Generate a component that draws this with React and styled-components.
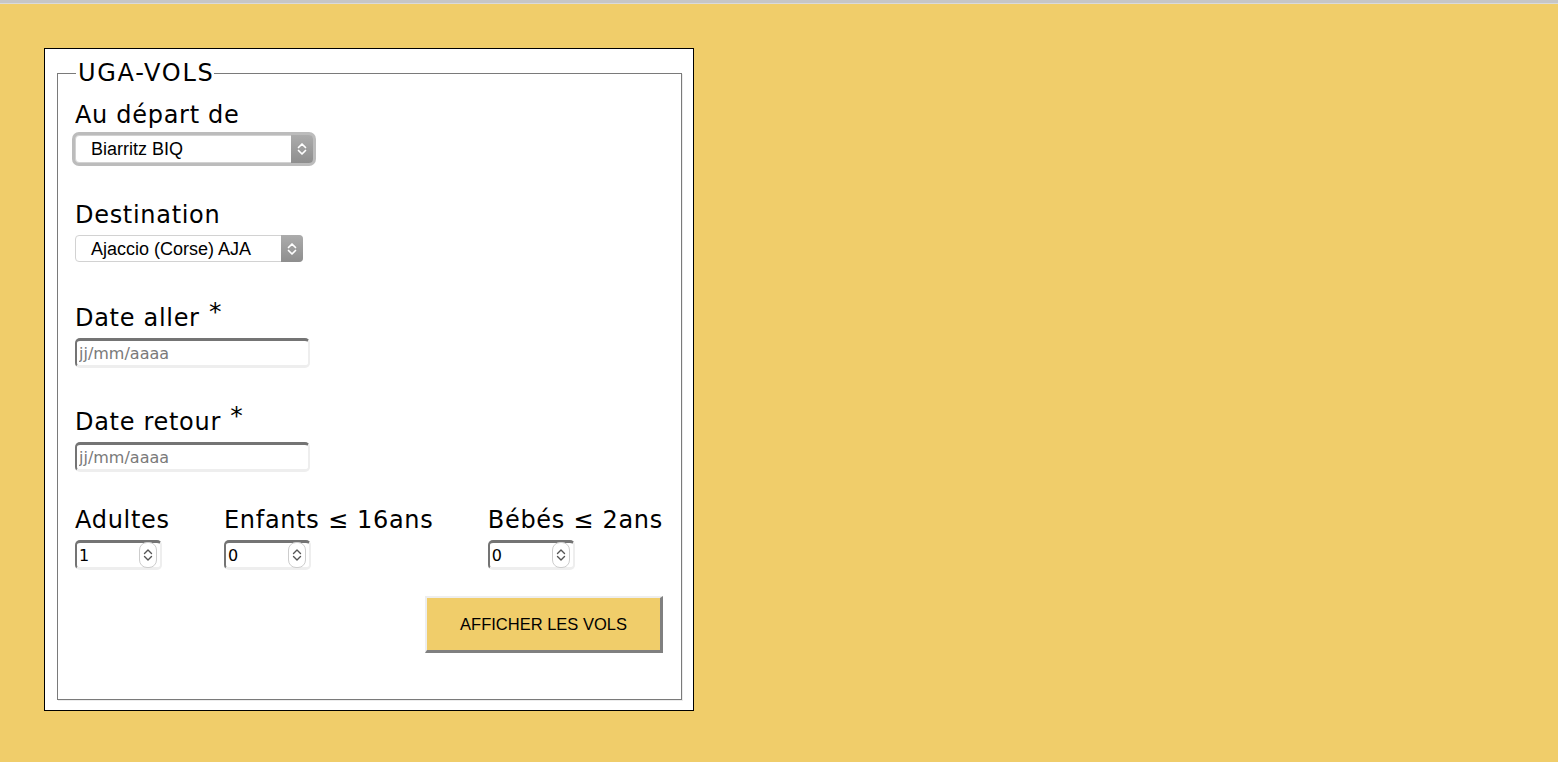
import React from "react";
import styled, { createGlobalStyle } from "styled-components";

const GlobalStyle = createGlobalStyle`
  html, body {
    margin: 0;
    padding: 0;
    background: #f0cd6a;
  }
  body {
    font-family: "DejaVu Sans", Verdana, sans-serif;
    height: 762px;
    overflow: hidden;
  }
`;

const TopRule = styled.div`
  height: 3px;
  background: #c6c6c6;
  border-bottom: 1px solid #dadada;
`;

const Page = styled.div`
  padding: 44px 0 0 44px;
`;

const Card = styled.div`
  width: 650px;
  height: 663px;
  box-sizing: border-box;
  background: #fff;
  border: 1px solid #000;
  padding: 12px 11px 10px 12px;
`;

const Fieldset = styled.fieldset`
  margin: 0;
  height: 100%;
  box-sizing: border-box;
  border: 1px solid #7a7a7a;
  box-shadow: 1px 1px 0 #ececec;
  padding: 16px 18px 0 17px;
`;

const Legend = styled.legend`
  font-size: 24px;
  line-height: 24px;
  letter-spacing: 1.7px;
  padding: 0 0 0 2px;
  margin-left: 1px;
  color: #000;
`;

const Group = styled.div`
  display: flex;
  flex-direction: column;
  align-items: flex-start;
  margin-bottom: ${p => p.$after}px;
`;

const Label = styled.label`
  font-size: 24px;
  line-height: 28px;
  letter-spacing: 0.7px;
  color: #000;
  margin-bottom: 6px;
  white-space: nowrap;
`;

const Star = styled.span`
  font-size: 25px;
  line-height: 0;
  vertical-align: 6px;
  margin-left: 1px;
`;

const SelectBox = styled.div`
  display: flex;
  align-items: center;
  width: ${p => p.$w}px;
  height: ${p => p.$h}px;
  box-sizing: border-box;
  border: 1px solid #d2d2d2;
  border-radius: 4px;
  background: #fff;
  font-family: "Liberation Sans", Arial, sans-serif;
  font-size: 18px;
  color: #000;
  ${p => p.$focused && "box-shadow: 0 0 0 3px #bcbcbc;"}
`;

const SelectText = styled.span`
  flex: 1;
  padding-left: 15px;
  padding-top: 1px;
`;

const SelectArrow = styled.span`
  align-self: stretch;
  width: 22px;
  margin: -1px -1px -1px 0;
  border-radius: 0 4px 4px 0;
  background: linear-gradient(#acacac, #8e8e8e);
  display: flex;
  align-items: center;
  justify-content: center;
`;

const TextField = styled.input`
  width: ${p => p.$w}px;
  height: 30px;
  box-sizing: border-box;
  border-style: solid;
  border-width: 3px 2px 3px 2px;
  border-color: #747474 #eeeeee #eeeeee #747474;
  border-radius: 5px;
  padding: 0 2px;
  font-family: "DejaVu Sans", Verdana, sans-serif;
  font-size: 16px;
  color: #000;
  background: #fff;
  outline: none;
  &::placeholder {
    color: #7a7a7a;
  }
`;

const CountRow = styled.div`
  display: flex;
  justify-content: space-between;
  margin-bottom: 26px;
`;

const NumberBox = styled.div`
  display: flex;
  align-items: center;
  width: 87px;
  height: 30px;
  box-sizing: border-box;
  border-style: solid;
  border-width: 3px 2px 3px 2px;
  border-color: #747474 #eeeeee #eeeeee #747474;
  border-radius: 5px;
  background: #fff;
`;

const NumberInput = styled.input`
  flex: 1;
  width: 0;
  border: none;
  outline: none;
  padding: 0 0 0 2px;
  font-family: "DejaVu Sans", Verdana, sans-serif;
  font-size: 16px;
  color: #000;
  background: transparent;
`;

const Spinner = styled.span`
  width: 18px;
  height: 26px;
  box-sizing: border-box;
  margin-right: 3px;
  border: 1px solid #cdcdcd;
  border-radius: 8px;
  display: flex;
  align-items: center;
  justify-content: center;
  background: #fff;
`;

const Actions = styled.div`
  display: flex;
  justify-content: flex-end;
`;

const Button = styled.button`
  width: 238px;
  height: 57px;
  box-sizing: border-box;
  background: #f0cd6a;
  border-style: solid;
  border-width: 2px 3px 3px 2px;
  border-color: #eeeeee #808080 #808080 #eeeeee;
  font-family: "Liberation Sans", Arial, sans-serif;
  font-size: 16.5px;
  color: #000;
  padding: 0;
  cursor: pointer;
`;

const Chevrons = ({ color, width }) => (
  <svg width="12" height="18" viewBox="0 0 12 18">
    <polyline points="2.5,7.5 6,4 9.5,7.5" fill="none" stroke={color} strokeWidth={width} strokeLinecap="round" strokeLinejoin="round" />
    <polyline points="2.5,10.5 6,14 9.5,10.5" fill="none" stroke={color} strokeWidth={width} strokeLinecap="round" strokeLinejoin="round" />
  </svg>
);

const Select = ({ value, w, h, focused }) => (
  <SelectBox $w={w} $h={h} $focused={focused}>
    <SelectText>{value}</SelectText>
    <SelectArrow>
      <Chevrons color="#fff" width={1.7} />
    </SelectArrow>
  </SelectBox>
);

const Counter = ({ label, value }) => (
  <Group $after={0}>
    <Label>{label}</Label>
    <NumberBox>
      <NumberInput defaultValue={value} />
      <Spinner>
        <Chevrons color="#555" width={1.4} />
      </Spinner>
    </NumberBox>
  </Group>
);

export default function App() {
  return (
    <>
      <GlobalStyle />
      <TopRule />
      <Page>
        <Card>
          <Fieldset>
            <Legend>UGA-VOLS</Legend>
            <Group $after={38}>
              <Label>Au départ de</Label>
              <Select value="Biarritz BIQ" w={238} h={28} focused />
            </Group>
            <Group $after={42}>
              <Label>Destination</Label>
              <Select value="Ajaccio (Corse) AJA" w={228} h={27} />
            </Group>
            <Group $after={40}>
              <Label>
                Date aller <Star>*</Star>
              </Label>
              <TextField $w={235} placeholder="jj/mm/aaaa" />
            </Group>
            <Group $after={34}>
              <Label>
                Date retour <Star>*</Star>
              </Label>
              <TextField $w={235} placeholder="jj/mm/aaaa" />
            </Group>
            <CountRow>
              <Counter label="Adultes" value="1" />
              <Counter label="Enfants ≤ 16ans" value="0" />
              <Counter label="Bébés ≤ 2ans" value="0" />
            </CountRow>
            <Actions>
              <Button>AFFICHER LES VOLS</Button>
            </Actions>
          </Fieldset>
        </Card>
      </Page>
    </>
  );
}
